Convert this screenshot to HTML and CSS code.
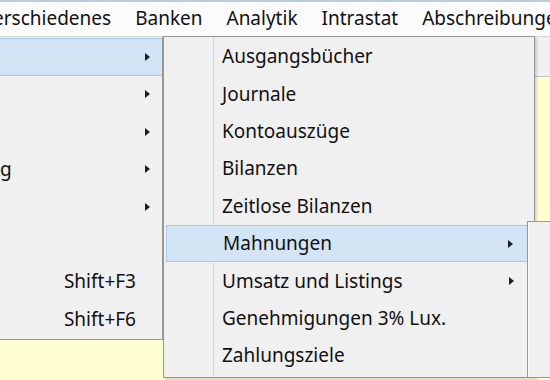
FILE: index.html
```html
<!DOCTYPE html>
<html>
<head>
    <title>Menü</title>
    <link rel="stylesheet" href="styles.css">
</head>
<body>
    <div class="menubar">
        <span class="menubar-item first">Verschiedenes</span>
        <span class="menubar-item">Banken</span>
        <span class="menubar-item">Analytik</span>
        <span class="menubar-item">Intrastat</span>
        <span class="menubar-item">Abschreibungen</span>
    </div>
    <div class="toolbar"></div>
    <div class="workspace"></div>

    <!-- first dropdown, mostly cut off on the left -->
    <div class="menu menu-main">
        <div class="menu-row active"><span class="label"></span><span class="arrow"></span></div>
        <div class="menu-row"><span class="label"></span><span class="arrow"></span></div>
        <div class="menu-row"><span class="label"></span><span class="arrow"></span></div>
        <div class="menu-row"><span class="label">g</span><span class="arrow"></span></div>
        <div class="menu-row"><span class="label"></span><span class="arrow"></span></div>
        <div class="menu-row"><span class="label"></span></div>
        <div class="menu-row"><span class="label"></span><span class="shortcut">Shift+F3</span></div>
        <div class="menu-row"><span class="label"></span><span class="shortcut">Shift+F6</span></div>
    </div>

    <!-- submenu -->
    <div class="menu menu-sub">
        <div class="sub-row"><span class="label">Ausgangsbücher</span></div>
        <div class="sub-row"><span class="label">Journale</span></div>
        <div class="sub-row"><span class="label">Kontoauszüge</span></div>
        <div class="sub-row"><span class="label">Bilanzen</span></div>
        <div class="sub-row"><span class="label">Zeitlose Bilanzen</span></div>
        <div class="sub-row active"><span class="label">Mahnungen</span><span class="arrow"></span></div>
        <div class="sub-row"><span class="label">Umsatz und Listings</span><span class="arrow"></span></div>
        <div class="sub-row"><span class="label">Genehmigungen 3% Lux.</span></div>
        <div class="sub-row"><span class="label">Zahlungsziele</span></div>
    </div>

    <!-- third level, only the edge is visible -->
    <div class="menu menu-third"></div>
</body>
</html>
```

FILE: styles.css
```css
body {
    margin: 0;
    width: 550px;
    height: 380px;
    overflow: hidden;
    position: relative;
    font-family: "Noto Sans", "Open Sans", sans-serif;
    font-size: 19px;
    color: #111111;
    background-color: #ffffd2;
}

.menubar {
    height: 37px;
    box-sizing: border-box;
    border-top: 2px solid #bccbdb;
    border-bottom: 1px solid #d6d6d6;
    padding-bottom: 2px;
    background-color: #fbfbfb;
    display: flex;
    align-items: center;
    white-space: nowrap;
    overflow: hidden;
}

.menubar-item {
    padding: 0 12px;
}

.menubar-item.first {
    margin-left: -30px;
}

.toolbar {
    height: 39px;
    background-color: #f0f0f0;
    border-bottom: 1px solid #c4c4c4;
}

.workspace {
    height: 304px;
    background-color: #ffffd2;
}

/* menus lie over the window */
.menu {
    position: absolute;
    background-color: #f0f0f0;
    box-sizing: border-box;
}

.menu-main {
    left: 0;
    top: 37px;
    width: 163px;
    height: 303px;
    padding-top: 1px;
    border-right: 1px solid #979797;
    border-bottom: 1px solid #979797;
}

.menu-row {
    height: 37.5px;
    box-sizing: border-box;
    display: flex;
    align-items: center;
    padding-right: 12px;
    padding-bottom: 1px;
}

.menu-row .label {
    flex: 1;
}

.menu-row.active {
    background-color: #d3e4f4;
    border-top: 1px solid #a9c8e6;
    border-bottom: 1px solid #a9c8e6;
}

.menu-row .arrow {
    margin-top: 1px;
}

.shortcut {
    margin-right: 14px;
}

.arrow {
    width: 0;
    height: 0;
    border-top: 4.5px solid transparent;
    border-bottom: 4.5px solid transparent;
    border-left: 5px solid #1e1e1e;
}

.menu-sub {
    left: 163px;
    top: 36px;
    width: 372px;
    height: 342px;
    padding: 1px 2px;
    border: 1px solid #979797;
    box-shadow: 2px 2px 2px rgba(0, 0, 0, 0.15);
    background-image: linear-gradient(to right, transparent 49px, #d9d9d9 49px, #d9d9d9 50px, transparent 50px);
}

.sub-row {
    height: 37.4px;
    box-sizing: border-box;
    display: flex;
    align-items: center;
    padding-left: 56px;
    padding-right: 18px;
    padding-bottom: 1px;
}

.sub-row .label {
    flex: 1;
}

.sub-row .arrow {
    margin-top: 1px;
}

.sub-row.active {
    background-color: #d3e4f4;
    border: 1px solid #a9c8e6;
}

.menu-third {
    left: 527px;
    top: 221px;
    width: 40px;
    height: 157px;
    border: 1px solid #979797;
    border-right: none;
    box-shadow: inset 1px 0 0 #fafafa;
}
```
